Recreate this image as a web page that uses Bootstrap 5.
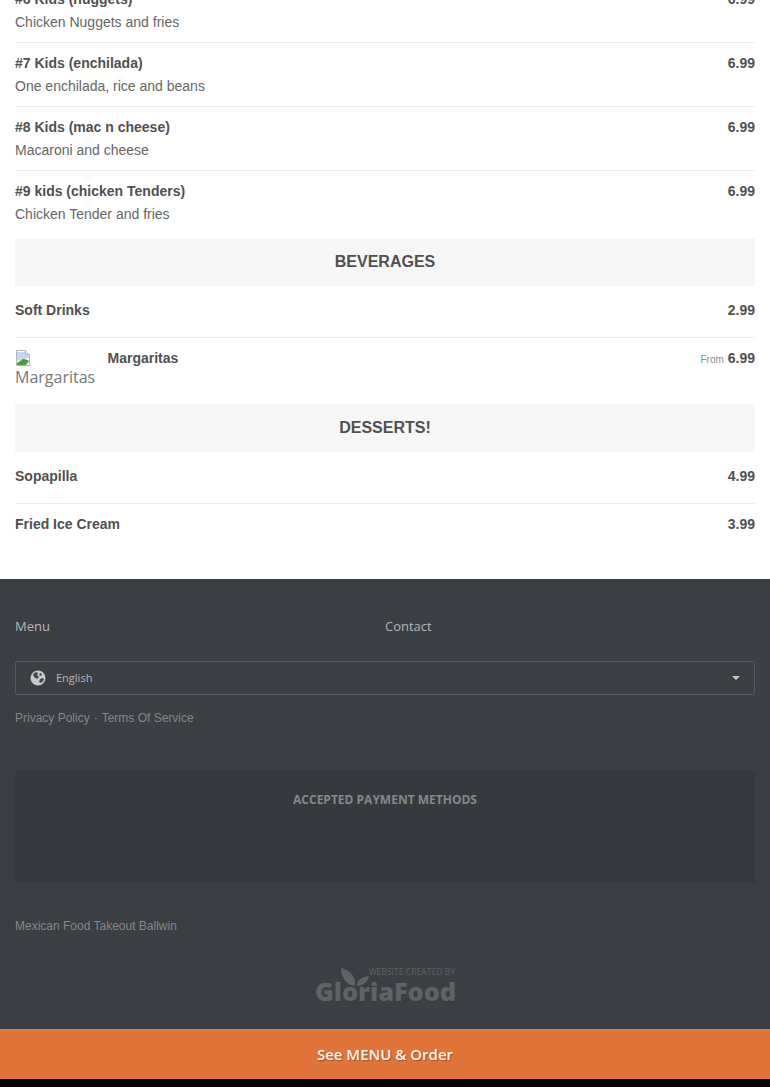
<!DOCTYPE html>
<html lang="en">
<head>
    <meta charset="UTF-8">
    <meta name="viewport" content="width=device-width, initial-scale=1.0">
    <title>Mexican Food Takeout Ballwin</title>
    <link href="https://cdn.jsdelivr.net/npm/bootstrap@5.3.0/dist/css/bootstrap.min.css" rel="stylesheet">
    <style>
        html, body { height: 1087px; overflow: hidden; }
        body { font-family: "Liberation Sans", Arial, sans-serif; font-size: 14px; color: #505050; background: #000; }
        .page-wrap { height: 1079px; background: #fff; overflow: hidden; display: flex; flex-direction: column; }
        .menu-part { padding: 0 15px; height: 579px; flex: none; }
        .food-row { display: flex; justify-content: space-between; padding: 10px 0 8px; border-bottom: 1px solid #ececec; height: 64px; }
        .food-row.first-row { padding-top: 0; margin-top: -11px; height: 54px; }
        .food-row.no-line { border-bottom: 0; }
        .food-row.tight { height: 52px; padding-top: 14px; }
        .food-row.pic-row { height: 66px; padding-top: 10px; }
        .food-row.last-row { padding-top: 10px; }
        .food-name { font-weight: 700; line-height: 20px; color: #505050; }
        .food-desc { line-height: 20px; margin-top: 3px; color: #666; }
        .food-price { font-weight: 700; line-height: 20px; color: #505050; }
        .from-label { font-size: 10px; font-weight: 400; color: #8a8a8a; }
        .group-band { height: 48px; background: #f6f6f6; text-align: center; font-size: 16px; font-weight: 700; line-height: 47px; color: #505050; margin-top: 3px; }
        .group-band.flush { margin-top: 0; }
        .broken-pic { width: 82px; flex: none; font-family: "Open Sans", sans-serif; font-size: 16px; line-height: 19px; color: #777; margin-right: 10.5px; padding-top: 2px; }
        .broken-pic svg { display: block; margin-bottom: 2px; }
        .footer-part { height: 450px; flex: none; background: #3b3e43; padding: 0 15px; color: #a9abad; }
        .foot-links { padding-top: 37px; height: 82px; font-family: "Open Sans", sans-serif; font-size: 13px; line-height: 20px; }
        .foot-links a { color: #b4b6b8; text-decoration: none; }
        .lang-box { height: 34px; border: 1px solid #55585d; border-radius: 2px; padding: 0 14px; font-family: "Open Sans", sans-serif; font-size: 11px; color: #b9babc; }
        .lang-globe { margin-right: 10px; }
        .lang-caret { width: 0; height: 0; border-left: 4px solid transparent; border-right: 4px solid transparent; border-top: 4px solid #c8c8c8; }
        .legal-links { margin-top: 14px; font-size: 12px; line-height: 18px; color: #85888c; }
        .legal-dot { margin: 0 4px; }
        .pay-box { height: 112px; margin-top: 44px; background: #36393e; border-radius: 2px; padding-top: 20px; text-align: center; font-family: "Open Sans", sans-serif; font-size: 12px; font-weight: 700; line-height: 18px; color: #85888c; }
        .town-line { margin-top: 34px; font-size: 12px; line-height: 18px; color: #85888c; }
        .maker-logo { width: 140px; height: 34px; margin: 33px auto 0; position: relative; color: #5f6266; }
        .maker-top { position: absolute; right: 0; top: 0; font-family: "Open Sans", sans-serif; font-size: 8.6px; line-height: 9px; white-space: nowrap; }
        .maker-name { position: absolute; left: 0; bottom: 0; font-family: "Open Sans", sans-serif; font-weight: 800; font-size: 25.5px; line-height: 22px; letter-spacing: -.1px; white-space: nowrap; }
        .maker-leaf { position: absolute; left: 25px; top: 0; }
        .order-bar { height: 50px; flex: none; background: #e0743a; border-top: 1px solid #e5804a; text-align: center; font-family: "Open Sans", sans-serif; font-size: 15px; font-weight: 600; line-height: 49px; color: #fff5ec; text-shadow: 1px 1px 1px rgba(0,0,0,.3); }
    </style>
</head>
<body>
<div class="page-wrap">
    <div class="menu-part">
        <div class="food-row first-row">
            <div><div class="food-name">#6 Kids (nuggets)</div><div class="food-desc">Chicken Nuggets and fries</div></div>
            <div class="food-price">6.99</div>
        </div>
        <div class="food-row">
            <div><div class="food-name">#7 Kids (enchilada)</div><div class="food-desc">One enchilada, rice and beans</div></div>
            <div class="food-price">6.99</div>
        </div>
        <div class="food-row">
            <div><div class="food-name">#8 Kids (mac n cheese)</div><div class="food-desc">Macaroni and cheese</div></div>
            <div class="food-price">6.99</div>
        </div>
        <div class="food-row no-line">
            <div><div class="food-name">#9 kids (chicken Tenders)</div><div class="food-desc">Chicken Tender and fries</div></div>
            <div class="food-price">6.99</div>
        </div>
        <div class="group-band">BEVERAGES</div>
        <div class="food-row tight">
            <div class="food-name">Soft Drinks</div>
            <div class="food-price">2.99</div>
        </div>
        <div class="food-row no-line pic-row">
            <div class="d-flex">
                <div class="broken-pic">
                    <svg width="16" height="16" viewBox="0 0 16 16"><path d="M1.5.5h9l4 4v11h-13z" fill="#fff" stroke="#b5b5b5"/><path d="M10.5.5v4h4" fill="#eee" stroke="#b5b5b5"/><path d="M2 2h8v3h4v3L2 11z" fill="#c6d6f2"/><path d="M2 15v-2l6-4c3 0 5 1 6 2l-3 4z" fill="#4f9a3c"/></svg>
                    Margaritas
                </div>
                <div class="food-name">Margaritas</div>
            </div>
            <div class="food-price"><span class="from-label">From</span> 6.99</div>
        </div>
        <div class="group-band flush">DESSERTS!</div>
        <div class="food-row tight">
            <div class="food-name">Sopapilla</div>
            <div class="food-price">4.99</div>
        </div>
        <div class="food-row no-line tight last-row">
            <div class="food-name">Fried Ice Cream</div>
            <div class="food-price">3.99</div>
        </div>
    </div>
    <div class="footer-part">
        <div class="row g-0 foot-links">
            <div class="col-6"><a href="#">Menu</a></div>
            <div class="col-6"><a href="#">Contact</a></div>
        </div>
        <div class="lang-box d-flex align-items-center">
            <svg class="lang-globe" width="16" height="16" viewBox="0 0 16 16"><circle cx="8" cy="8" r="7.5" fill="#c9c9c9"/><path d="M3 4l3-2 2 1-1 2 2 2-2 2-3-2zM10 9l3-1 1 2-3 3-2-1zM10 3l2 1-1 2-2-1z" fill="#44474c"/></svg>
            <span class="flex-grow-1">English</span>
            <span class="lang-caret"></span>
        </div>
        <div class="legal-links">Privacy Policy<span class="legal-dot">·</span>Terms Of Service</div>
        <div class="pay-box">ACCEPTED PAYMENT METHODS</div>
        <div class="town-line">Mexican Food Takeout Ballwin</div>
        <div class="maker-logo">
            <svg class="maker-leaf" width="30" height="19" viewBox="0 0 30 19"><path d="M1 0c9 2 15 8 14 18C7 17 1 10 1 0zM17 18c0-6 4-9 12-10-1 6-6 10-12 10z" fill="#5f6266"/></svg>
            <div class="maker-top">WEBSITE CREATED BY</div>
            <div class="maker-name">GloriaFood</div>
        </div>
    </div>
    <div class="order-bar">See MENU &amp; Order</div>
</div>
<script src="https://cdn.jsdelivr.net/npm/bootstrap@5.3.0/dist/js/bootstrap.bundle.min.js"></script>
</body>
</html>
